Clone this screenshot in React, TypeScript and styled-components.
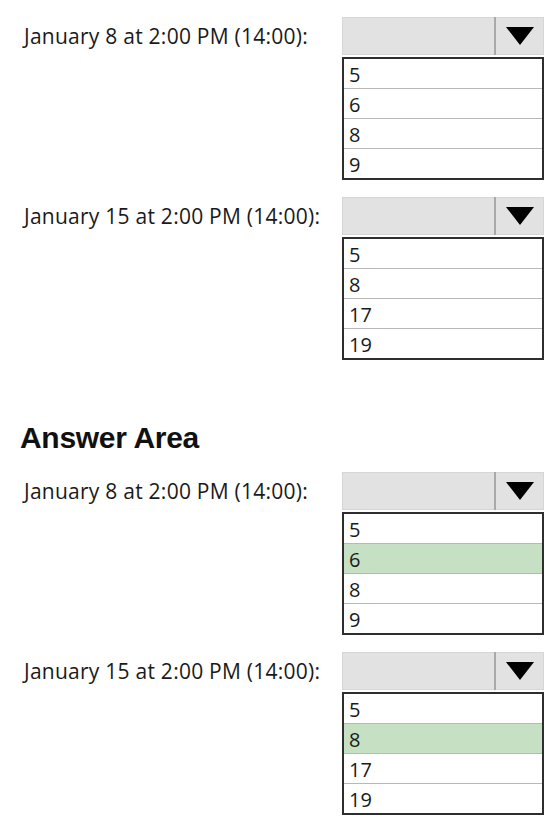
import React from "react"
import styled, { createGlobalStyle } from "styled-components"

const GlobalStyle = createGlobalStyle`
	html, body {
		margin: 0;
		padding: 0;
		background: #ffffff;
	}

	body {
		font-family: "Open Sans", "Liberation Sans", sans-serif;
		color: #1a1a1a;
	}
`

type Question = {
	label: string,
	options: string[],
	answer?: string,
}

const QUESTIONS: Question[] = [
	{ label: "January 8 at 2:00 PM (14:00):", options: ["5", "6", "8", "9"], answer: "6" },
	{ label: "January 15 at 2:00 PM (14:00):", options: ["5", "8", "17", "19"], answer: "8" },
]

const PageElement = styled.div`
	width: 556px;
	height: 826px;
	box-sizing: border-box;
	padding: 17px 0 0 22px;
	display: flex;
	flex-direction: column;
`

const SectionElement = styled.section`
	display: flex;
	flex-direction: column;
	gap: 17px;
`

const HeadingElement = styled.h2`
	margin: 61px 0 17px -2px;
	font-family: "Liberation Sans", Arial, sans-serif;
	font-size: 30px;
	font-weight: 700;
	line-height: 34px;
	letter-spacing: -0.3px;
	color: #111111;
`

const QuestionRowElement = styled.div`
	display: grid;
	grid-template-columns: 320px 202px;
	align-items: start;
`

const LabelElement = styled.span`
	height: 38px;
	display: flex;
	align-items: center;
	padding-left: 2px;
	font-size: 21px;
	letter-spacing: 0.25px;
	white-space: nowrap;
`

const DropdownElement = styled.div`
	display: flex;
	flex-direction: column;
	gap: 2px;
`

const DropdownHeaderElement = styled.div`
	height: 38px;
	display: grid;
	grid-template-columns: 1fr 50px;
	background: #e2e2e2;
	box-shadow: inset 0 0 0 1px #d6d6d6;
`

const DropdownButtonElement = styled.div`
	display: flex;
	align-items: center;
	justify-content: center;
	border-left: 2px solid #a9a9a9;
`

const OptionListElement = styled.ul`
	margin: 0;
	padding: 0;
	list-style: none;
	border: 2px solid #2e2e2e;
`

const OptionElement = styled.li<{ $selected: boolean }>`
	height: 29px;
	display: flex;
	align-items: flex-end;
	padding: 0 0 0 5px;
	font-size: 20px;
	line-height: 26px;
	background: ${props => props.$selected ? "#c5e0c3" : "#ffffff"};

	& + & {
		border-top: 1px solid #b8b8b8;
	}
`

function DropdownArrow() {
	return (
		<svg width="30" height="20" viewBox="0 0 30 20">
			<path d="M1 1 H29 L15 19 Z" fill="#000000" />
		</svg>
	)
}

function QuestionRow(props: { question: Question, showAnswer: boolean }) {
	const { question, showAnswer } = props

	return (
		<QuestionRowElement>
			<LabelElement>{question.label}</LabelElement>

			<DropdownElement>
				<DropdownHeaderElement>
					<div />
					<DropdownButtonElement>
						<DropdownArrow />
					</DropdownButtonElement>
				</DropdownHeaderElement>

				<OptionListElement>
					{question.options.map(option => (
						<OptionElement
							key={option}
							$selected={showAnswer && option === question.answer}
						>
							{option}
						</OptionElement>
					))}
				</OptionListElement>
			</DropdownElement>
		</QuestionRowElement>
	)
}

function App() {
	return (
		<>
			<GlobalStyle />
			<PageElement>
				<SectionElement>
					{QUESTIONS.map(question => (
						<QuestionRow key={question.label} question={question} showAnswer={false} />
					))}
				</SectionElement>

				<HeadingElement>Answer Area</HeadingElement>

				<SectionElement>
					{QUESTIONS.map(question => (
						<QuestionRow key={question.label} question={question} showAnswer={true} />
					))}
				</SectionElement>
			</PageElement>
		</>
	)
}

export default App
